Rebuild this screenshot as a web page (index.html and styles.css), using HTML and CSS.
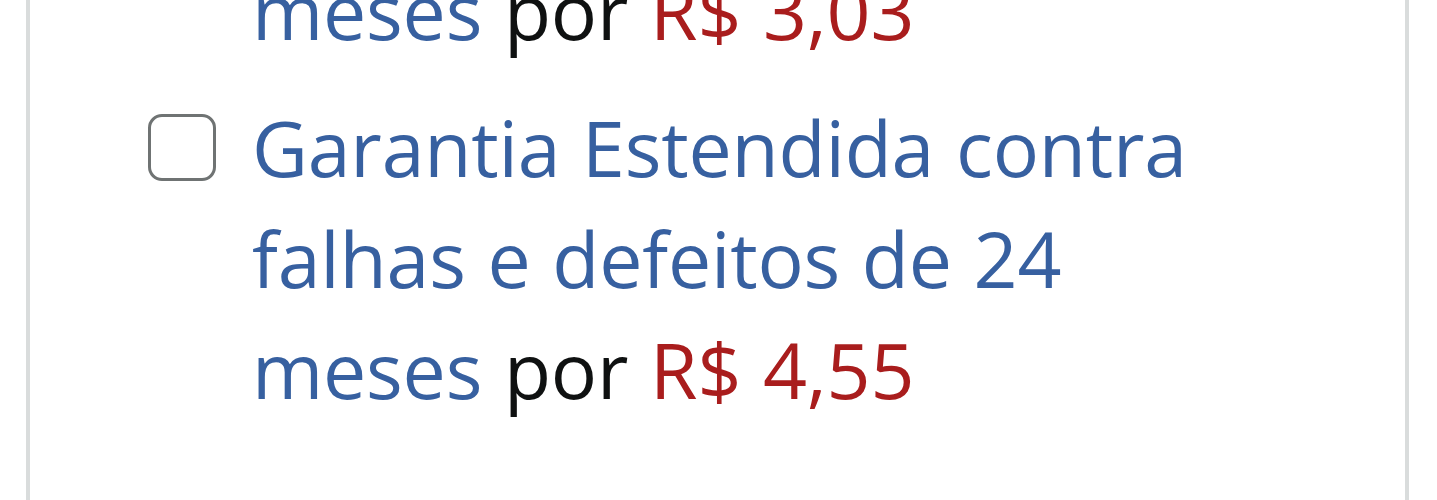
FILE: index.html
```html
<!DOCTYPE html>
<html lang="pt-BR">
<head>
    <meta charset="UTF-8">
    <meta name="viewport" content="width=device-width, initial-scale=1.0">
    <title>Garantia Estendida</title>
    <link rel="stylesheet" href="styles.css">
</head>
<body>
    <div class="warranty-box">
        <ul class="warranty-list">
            <li class="warranty-option">
                <input type="checkbox" id="warranty_12">
                <label for="warranty_12">
                    <span class="plan-name">Garantia Estendida contra falhas e defeitos de 12 meses</span>
                    por <span class="plan-price">R$ 3,03</span>
                </label>
            </li>
            <li class="warranty-option">
                <input type="checkbox" id="warranty_24">
                <label for="warranty_24">
                    <span class="plan-name">Garantia Estendida contra falhas e defeitos de 24 meses</span>
                    por <span class="plan-price">R$ 4,55</span>
                </label>
            </li>
        </ul>
    </div>
</body>
</html>
```

FILE: styles.css
```css
body {
    margin: 0;
    padding: 0;
    background: #fff;
    font-family: "Open Sans", "Noto Sans", Arial, sans-serif;
    color: #0f1111;
    overflow: hidden;
}

.warranty-box {
    margin: -267px 0 0 26px;
    width: 1383px;
    border-left: 4px solid #d9dcdc;
    border-right: 4px solid #d9dcdc;
    padding: 0 150px 200px 118px;
    box-sizing: border-box;
}

.warranty-list {
    list-style: none;
    margin: 0;
    padding: 0;
}

.warranty-option {
    display: flex;
    align-items: flex-start;
    gap: 36px;
    margin-bottom: 26px;
}

.warranty-option input {
    appearance: none;
    -webkit-appearance: none;
    flex: none;
    width: 68px;
    height: 67px;
    margin: 22px 0 0 0;
    border: 3px solid #6f7373;
    border-radius: 14px;
    background: #fff;
    box-sizing: border-box;
}

label {
    font-size: 77px;
    line-height: 111px;
    letter-spacing: -0.2px;
    word-spacing: 2px;
}

.plan-name {
    color: #3760a0;
}

.plan-price {
    color: #a91d1d;
}
```
